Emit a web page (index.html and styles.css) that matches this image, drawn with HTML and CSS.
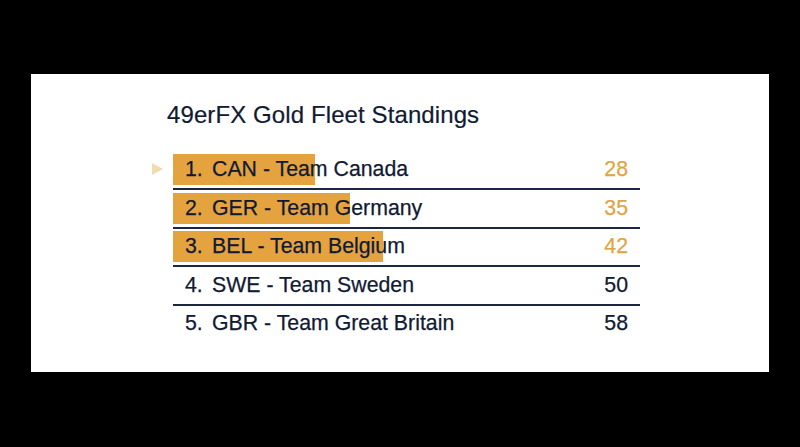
FILE: index.html
```html
<!DOCTYPE html>
<html>
<head>
<meta charset="utf-8">
<link rel="stylesheet" href="styles.css">
</head>
<body>
<div class="stage">
  <div class="panel">
    <h1 class="title">49erFX Gold Fleet Standings</h1>
    <div class="list">
      <div class="row">
        <span class="marker"></span>
        <div class="item" style="--w:142px">
          <span class="rank">1.</span><span class="name">CAN - Team Canada</span>
          <span class="pts gold">28</span>
        </div>
      </div>
      <div class="row">
        <span class="marker off"></span>
        <div class="item" style="--w:177px">
          <span class="rank">2.</span><span class="name">GER - Team Germany</span>
          <span class="pts gold">35</span>
        </div>
      </div>
      <div class="row">
        <span class="marker off"></span>
        <div class="item" style="--w:210px">
          <span class="rank">3.</span><span class="name">BEL - Team Belgium</span>
          <span class="pts gold">42</span>
        </div>
      </div>
      <div class="row">
        <span class="marker off"></span>
        <div class="item" style="--w:0px">
          <span class="rank">4.</span><span class="name">SWE - Team Sweden</span>
          <span class="pts">50</span>
        </div>
      </div>
      <div class="row last">
        <span class="marker off"></span>
        <div class="item" style="--w:0px">
          <span class="rank">5.</span><span class="name">GBR - Team Great Britain</span>
          <span class="pts">58</span>
        </div>
      </div>
    </div>
  </div>
</div>
</body>
</html>
```

FILE: styles.css
```css
html, body {
  margin: 0;
  padding: 0;
  background: #000;
}
body {
  width: 800px;
  height: 447px;
  overflow: hidden;
  font-family: "Liberation Sans", Arial, sans-serif;
  color: #111a33;
}
.stage {
  padding: 74px 31px 0 31px;
}
.panel {
  background: #fff;
  height: 298px;
  box-sizing: border-box;
  padding: 26px 0 0 136px;
}
.title {
  margin: 0 0 21px 0;
  font-weight: normal;
  font-size: 24px;
  line-height: 30px;
  letter-spacing: 0.1px;
  color: #111a33;
  -webkit-text-stroke: 0.2px #111a33;
}
.list {
  width: 467px;
  margin-left: 6px;
}
.row {
  position: relative;
  border-bottom: 2px solid #1c2544;
  padding: 3px 0 3px 0;
  height: 31px;
}
.row + .row {
  padding-top: 2.5px;
}
.row.last {
  border-bottom: none;
}
.marker {
  position: absolute;
  left: -21px;
  top: 12px;
  width: 0;
  height: 0;
  border-top: 6px solid transparent;
  border-bottom: 6px solid transparent;
  border-left: 11px solid #f1dcb0;
}
.marker.off {
  display: none;
}
.item {
  height: 31px;
  display: flex;
  align-items: center;
  background: linear-gradient(to right, #e4a33f 0, #e4a33f var(--w), transparent var(--w));
  font-size: 21.3px;
  -webkit-text-stroke: 0.25px currentColor;
}
.rank {
  width: 27px;
  margin-left: 12px;
}
.name {
  flex: 1;
}
.pts {
  margin-right: 12px;
}
.pts.gold {
  color: #e1a444;
}
```
